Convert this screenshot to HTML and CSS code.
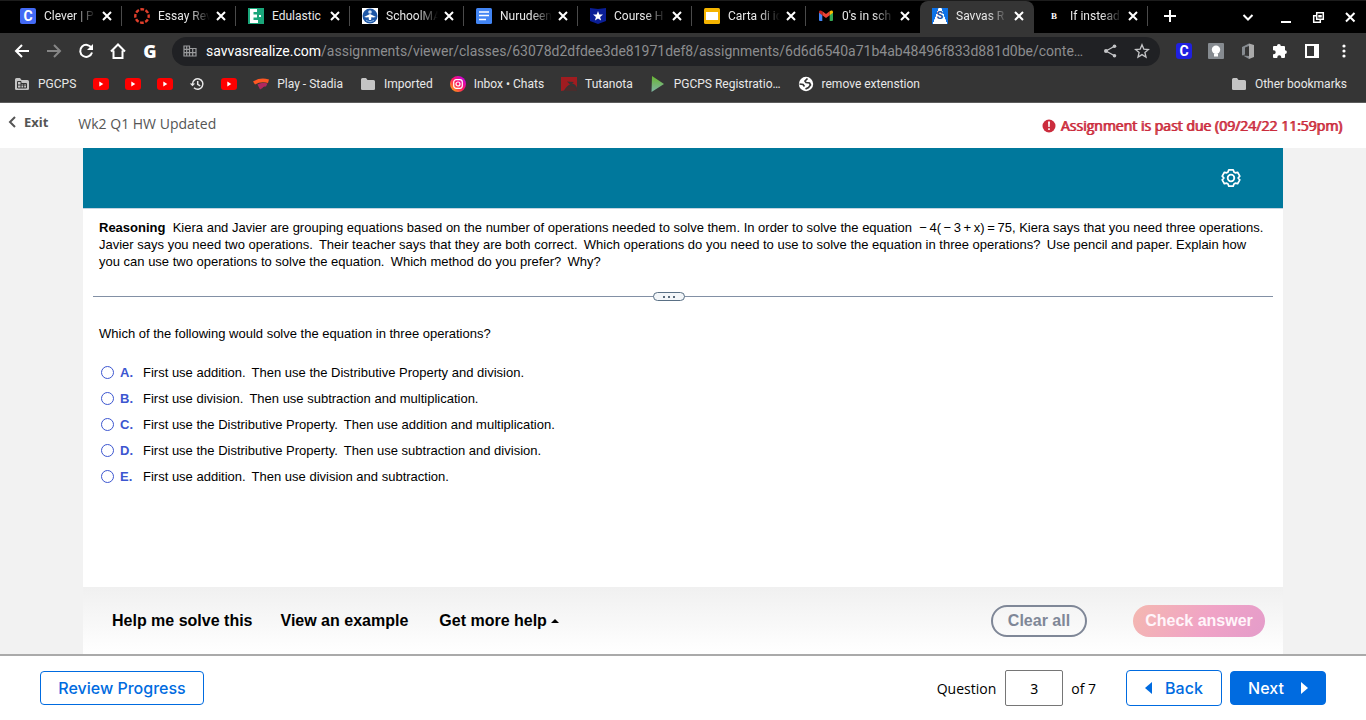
FILE: index.html
```html
<!DOCTYPE html>
<html lang="en">
<head>
    <meta charset="UTF-8">
    <meta name="viewport" content="width=device-width, initial-scale=1.0">
    <title>Savvas Realize</title>
    <link rel="stylesheet" href="styles.css">
</head>
<body>
    <div class="browser">
        <div class="tabs">
            <div class="tab">
                <span class="favicon clever">C</span>
                <a class="tab-title" href="#">Clever | P</a>
                <button class="close" aria-label="Close tab"><svg width="10" height="10" viewBox="0 0 10 10"><path d="M1 1l8 8M9 1L1 9"/></svg></button>
            </div>
            <div class="tab">
                <svg class="favicon" width="16" height="16" viewBox="0 0 16 16"><circle cx="8" cy="8" r="6.7" fill="none" stroke="#e13f2b" stroke-width="2.4" stroke-dasharray="3.7 1.56" stroke-dashoffset="1.8"/></svg>
                <a class="tab-title" href="#">Essay Rev</a>
                <button class="close" aria-label="Close tab"><svg width="10" height="10" viewBox="0 0 10 10"><path d="M1 1l8 8M9 1L1 9"/></svg></button>
            </div>
            <div class="tab">
                <svg class="favicon" width="16" height="16" viewBox="0 0 16 16"><path fill="#1aa67a" d="M0 0h16v16H0z"/><path fill="#fff" d="M2 1h7v3H5.500v2.500H9v3H5.500V12H10v3H2zM11 7h2v2h-2z"/></svg>
                <a class="tab-title fits" href="#">Edulastic</a>
                <button class="close" aria-label="Close tab"><svg width="10" height="10" viewBox="0 0 10 10"><path d="M1 1l8 8M9 1L1 9"/></svg></button>
            </div>
            <div class="tab">
                <svg class="favicon" width="16" height="16" viewBox="0 0 16 16"><path fill="#fff" d="M0 0h16v16H0z"/><circle cx="8" cy="8" r="7.500" fill="#1d56a5"/><circle cx="8" cy="4" r="1.800" fill="#cfe0f5"/><path d="M2 9l4-2 2-1 2 1 4 2-3 .5-1.500-.5L9 12H7L6.500 9 5 9.500z" fill="#fff"/><path d="M4 12.500q4 2.500 8 0" stroke="#8db8e8" fill="none"/></svg>
                <a class="tab-title" href="#">SchoolMA</a>
                <button class="close" aria-label="Close tab"><svg width="10" height="10" viewBox="0 0 10 10"><path d="M1 1l8 8M9 1L1 9"/></svg></button>
            </div>
            <div class="tab">
                <svg class="favicon" width="16" height="16" viewBox="0 0 16 16"><rect width="16" height="16" rx="1.500" fill="#4285f4"/><path d="M3 4h10M3 7.500h10M3 11.500h7" stroke="#fff" stroke-width="1.700"/></svg>
                <a class="tab-title" href="#">Nurudeen</a>
                <button class="close" aria-label="Close tab"><svg width="10" height="10" viewBox="0 0 10 10"><path d="M1 1l8 8M9 1L1 9"/></svg></button>
            </div>
            <div class="tab">
                <svg class="favicon" width="16" height="16" viewBox="0 0 16 16"><path fill="#0a1e96" d="M0 0l8 1 8-1v13l-8 3-8-3z"/><path fill="#fff" d="M8 3l1.300 3.400 3.700.2-2.900 2.300 1 3.600L8 10.500l-3.100 2 1-3.600L3 6.600l3.700-.2z"/></svg>
                <a class="tab-title" href="#">Course H</a>
                <button class="close" aria-label="Close tab"><svg width="10" height="10" viewBox="0 0 10 10"><path d="M1 1l8 8M9 1L1 9"/></svg></button>
            </div>
            <div class="tab">
                <svg class="favicon" width="16" height="16" viewBox="0 0 16 16"><rect width="16" height="16" rx="1.500" fill="#f5b400"/><path fill="#fff" d="M2 4h12v8H2z"/></svg>
                <a class="tab-title" href="#">Carta di id</a>
                <button class="close" aria-label="Close tab"><svg width="10" height="10" viewBox="0 0 10 10"><path d="M1 1l8 8M9 1L1 9"/></svg></button>
            </div>
            <div class="tab no-line">
                <svg class="favicon" width="16" height="16" viewBox="0 0 16 16"><path fill="#4285f4" d="M1 4l3.300 2.500V13H2a1 1 0 0 1-1-1z"/><path fill="#34a853" d="M15 4l-3.300 2.500V13H14a1 1 0 0 0 1-1z"/><path fill="#ea4335" d="M4.300 3.200L8 6l3.700-2.800v4L8 10 4.300 7.200z"/><path fill="#c5221f" d="M1 4c0-2 2-2 3.300-.8v4L1 4.700z"/><path fill="#fbbc04" d="M15 4c0-2-2-2-3.300-.8v4L15 4.700z"/></svg>
                <a class="tab-title" href="#">0's in sch</a>
                <button class="close" aria-label="Close tab"><svg width="10" height="10" viewBox="0 0 10 10"><path d="M1 1l8 8M9 1L1 9"/></svg></button>
            </div>
            <div class="tab active no-line">
                <span class="favicon savvas">S</span>
                <a class="tab-title" href="#">Savvas R</a>
                <button class="close" aria-label="Close tab"><svg width="10" height="10" viewBox="0 0 10 10"><path d="M1 1l8 8M9 1L1 9"/></svg></button>
            </div>
            <div class="tab">
                <span class="favicon brainly">B</span>
                <a class="tab-title" href="#">If instead</a>
                <button class="close" aria-label="Close tab"><svg width="10" height="10" viewBox="0 0 10 10"><path d="M1 1l8 8M9 1L1 9"/></svg></button>
            </div>
            <button class="new-tab" aria-label="New tab"><svg width="12" height="12" viewBox="0 0 12 12"><path d="M6 0v12M0 6h12"/></svg></button>
            <div class="window-buttons">
                <button aria-label="Search tabs"><svg width="16" height="16" viewBox="0 0 16 16"><path d="M3.500 6L8 10.500 12.500 6"/></svg></button>
                <button aria-label="Minimize"><svg width="16" height="16" viewBox="0 0 16 16"><path d="M3 13h10"/></svg></button>
                <button aria-label="Restore"><svg width="16" height="16" viewBox="0 0 16 16"><path class="thin" d="M6.700 3.700h6.600v6.600H6.700zM6 6.700H3.700v6.600h6.600V11M9 6.700h2v1H9z"/></svg></button>
                <button aria-label="Close"><svg width="16" height="16" viewBox="0 0 16 16"><path d="M4 4l8.500 8.500M12.500 4L4 12.500"/></svg></button>
            </div>
        </div>

        <div class="toolbar">
            <button aria-label="Back"><svg width="16" height="16" viewBox="0 0 16 16"><path d="M15 8H2M8 2L2 8l6 6"/></svg></button>
            <button class="dim" aria-label="Forward"><svg width="16" height="16" viewBox="0 0 16 16"><path d="M1 8h13M8 2l6 6-6 6"/></svg></button>
            <button aria-label="Reload"><svg width="16" height="16" viewBox="0 0 16 16"><path d="M13.500 5A6 6 0 1 0 14 9.500"/><path class="solid" d="M15 1v6H9z"/></svg></button>
            <button aria-label="Home"><svg width="16" height="16" viewBox="0 0 16 16"><path d="M1 8.500L8 1.500l7 7M3.500 7.500V15h9V7.500"/></svg></button>
            <button class="google" aria-label="Google">G</button>
            <div class="address">
                <svg width="14" height="14" viewBox="0 0 14 14"><path class="site" d="M1 2h5.500v10H1zM6.500 4.500H13V12H6.500M1 5.300h5.500M1 8.600h12M3.700 2v10M9.700 4.500V12"/></svg>
                <a class="url" href="#"><span class="host">savvasrealize.com</span>/assignments/viewer/classes/63078d2dfdee3de81971def8/assignments/6d6d6540a71b4ab48496f833d881d0be/conte…</a>
                <button aria-label="Share"><svg width="16" height="16" viewBox="0 0 16 16"><path class="line" d="M12.500 3.300L4 8l8.500 4.700"/><g class="solid silver"><circle cx="12.500" cy="3.300" r="1.800"/><circle cx="4" cy="8" r="2"/><circle cx="12.500" cy="12.700" r="1.800"/></g></svg></button>
                <button aria-label="Bookmark"><svg width="16" height="16" viewBox="0 0 16 16"><path class="line" d="M8 1.800l1.800 4.300 4.700.4-3.600 3 1.100 4.600L8 11.600l-4 2.500 1.100-4.600-3.600-3 4.700-.4z"/></svg></button>
            </div>
            <div class="extensions">
                <button class="favicon ext-clever" aria-label="Clever">C</button>
                <button aria-label="Lightbulb"><svg width="16" height="16" viewBox="0 0 16 16"><rect class="solid gray" width="16" height="16" rx="1"/><circle class="solid" cx="8" cy="6.800" r="4.200"/><path class="solid" d="M6 11h4v2.500H6z"/></svg></button>
                <button aria-label="Office"><svg width="16" height="16" viewBox="0 0 16 16"><path class="solid gray" d="M2 4l7-3.500V3L5 4.500v7l-3 1z"/><path class="solid light" d="M9 .5L14 2v12l-5 2z"/><path class="solid gray" d="M3 12.500l6 .5v3z"/></svg></button>
                <button aria-label="Extensions"><svg width="16" height="16" viewBox="0 0 16 16"><path class="solid" d="M5 3a1.900 1.900 0 0 1 3.800 0H12q1 0 1 1v3.200a1.900 1.900 0 0 1 0 3.800v3q0 1-1 1H9.300v-.7a2 2 0 0 0-4 0v.7H2q-1 0-1-1v-2.700h.7a2 2 0 0 0 0-4H1V4q0-1 1-1z"/></svg></button>
                <button aria-label="Side panel"><svg width="16" height="16" viewBox="0 0 16 16"><path class="solid" fill-rule="evenodd" d="M1 1h14v14H1zm2 2v10h7V3z"/></svg></button>
                <button aria-label="Menu"><svg width="16" height="16" viewBox="0 0 16 16"><g class="solid"><circle cx="8" cy="3" r="1.600"/><circle cx="8" cy="8" r="1.600"/><circle cx="8" cy="13" r="1.600"/></g></svg></button>
            </div>
        </div>

        <nav class="bookmarks">
            <a class="named" href="#"><svg width="16" height="14" viewBox="0 0 16 14"><path d="M1 2.500Q1 1 2.500 1H6l1.500 2h6Q15 3 15 4.500V12q0 1-1.500 1h-11Q1 13 1 12z" fill="#c4c4c4"/><path d="M3.500 4.500h3.500v6.500h-3.500zM7 6.500h5.500v4.500H7M3.500 8h9M9.700 6.500v4.500" fill="none" stroke="#353535"/></svg>PGCPS</a>
            <a href="#" aria-label="YouTube"><svg width="16" height="12" viewBox="0 0 16 12"><rect width="16" height="12" rx="3" fill="#f00"/><path d="M6.300 3.500v5l4-2.500z" fill="#fff"/></svg></a>
            <a href="#" aria-label="YouTube"><svg width="16" height="12" viewBox="0 0 16 12"><rect width="16" height="12" rx="3" fill="#f00"/><path d="M6.300 3.500v5l4-2.500z" fill="#fff"/></svg></a>
            <a href="#" aria-label="YouTube"><svg width="16" height="12" viewBox="0 0 16 12"><rect width="16" height="12" rx="3" fill="#f00"/><path d="M6.300 3.500v5l4-2.500z" fill="#fff"/></svg></a>
            <a href="#" aria-label="History"><svg width="16" height="14" viewBox="0 0 16 14"><path d="M3.500 7A5.200 5.200 0 1 1 5 10.700M8.700 4v3.300l2.500 1.500" fill="none" stroke="#e8e8e8" stroke-width="1.500"/><path d="M.8 6.500h5.400L3.500 9.300z" fill="#e8e8e8"/></svg></a>
            <a href="#" aria-label="YouTube"><svg width="16" height="12" viewBox="0 0 16 12"><rect width="16" height="12" rx="3" fill="#f00"/><path d="M6.300 3.500v5l4-2.500z" fill="#fff"/></svg></a>
            <a class="named" href="#"><svg width="16" height="12" viewBox="0 0 16 12"><path d="M0 3.500Q7-1 16 1.500L15 5Q8 3 2 6.500z" fill="#ff5722"/><path d="M4.500 6.500q5-3 10-1l-1.500 3q-3-.5-3.500 1.500L7 11.500z" fill="#b0285f"/></svg>Play - Stadia</a>
            <a class="named" href="#"><svg width="16" height="14" viewBox="0 0 16 14"><path d="M1 2.500Q1 1 2.500 1H6l1.500 2h6Q15 3 15 4.500V12q0 1-1.500 1h-11Q1 13 1 12z" fill="#c4c4c4"/></svg>Imported</a>
            <a class="named" href="#"><svg width="16" height="16" viewBox="0 0 16 16"><defs><linearGradient id="insta" x1="0" y1="1" x2="1" y2="0"><stop offset="0" stop-color="#ffc400"/><stop offset=".5" stop-color="#ff1464"/><stop offset="1" stop-color="#b400ff"/></linearGradient></defs><circle cx="8" cy="8" r="8" fill="url(#insta)"/><rect x="3.700" y="3.700" width="8.600" height="8.600" rx="2.500" fill="none" stroke="#fff" stroke-width="1.200"/><circle cx="8" cy="8" r="2" fill="none" stroke="#fff" stroke-width="1.200"/></svg>Inbox • Chats</a>
            <a class="named" href="#"><svg width="16" height="16" viewBox="0 0 16 16"><path d="M0 1h16v11q-1-4-5-4.500L13 6 6 5.500l3 3q-3 1-6 6L0 15z" fill="#a01c20"/><path d="M4 15q2-5 7-5 4 1 5 5z" fill="#4a2c2c"/></svg>Tutanota</a>
            <a class="named" href="#"><svg width="16" height="16" viewBox="0 0 16 16"><defs><linearGradient id="play" x1="0" y1="0" x2="0" y2="1"><stop offset="0" stop-color="#68b631"/><stop offset="1" stop-color="#7fb5a5"/></linearGradient></defs><path d="M2 0l12 8-12.500 8z" fill="url(#play)"/></svg>PGCPS Registratio…</a>
            <a class="named" href="#"><svg width="16" height="16" viewBox="0 0 16 16"><circle cx="8" cy="8" r="7.200" fill="#fff"/><path d="M9.500 2.500L7 5l1 1.500 3.500.5 1 2-2 2.500-3 1.500M1.500 8l3.500.5 1.500 2" fill="none" stroke="#353535" stroke-width="1.700"/></svg>remove extenstion</a>
            <a class="named other" href="#"><svg width="16" height="14" viewBox="0 0 16 14"><path d="M1 2.500Q1 1 2.500 1H6l1.500 2h6Q15 3 15 4.500V12q0 1-1.500 1h-11Q1 13 1 12z" fill="#c4c4c4"/></svg>Other bookmarks</a>
        </nav>
    </div>

    <header class="header">
        <a class="exit" href="#"><svg width="8" height="12" viewBox="0 0 8 12"><path d="M7 1L2 6l5 5" fill="none" stroke="#555" stroke-width="2"/></svg>Exit</a>
        <h1>Wk2 Q1 HW Updated</h1>
        <div class="past-due"><svg width="14" height="14" viewBox="0 0 14 14"><circle cx="7" cy="7" r="6.500" fill="#cb2c3d"/><path d="M6 2.500h2L7.700 8H6.300zM6.200 9.200h1.600v1.900H6.200z" fill="#fff"/></svg>Assignment is past due (09/24/22 11:59pm)</div>
    </header>

    <main class="viewer">
        <div class="player">
            <div class="banner">
                <button aria-label="Settings"><svg width="20" height="20" viewBox="0 0 20 20"><path d="M7.800 1.800h4.400l.8 2.300 1.200.7 2.400-.5 2.200 3.800-1.700 1.900 1.700 1.900-2.200 3.800-2.400-.5-1.200.7-.8 2.300H7.800L7 15.900l-1.200-.7-2.400.5-2.200-3.800L2.900 10 1.200 8.100l2.200-3.800 2.400.5L7 4.100z" fill="none" stroke="#fff" stroke-width="1.700" stroke-linejoin="round"/><circle cx="10" cy="10" r="3.300" fill="none" stroke="#fff" stroke-width="1.800"/></svg></button>
            </div>
            <div class="question">
                <p class="problem"><b>Reasoning</b>&nbsp; Kiera and Javier are grouping equations based on the number of operations needed to solve them. In order to solve the equation &nbsp;−&#8201;4(&#8201;−&#8201;3&#8201;+&#8201;x)&#8201;=&#8201;75, Kiera says that you need three operations. Javier says you need two operations.&#8201; Their teacher says that they are both correct.&#8201; Which operations do you need to use to solve the equation in three operations?&#8201; Use pencil and paper. Explain how you can use two operations to solve the equation.&#8201; Which method do you prefer?&#8201; Why?</p>
                <div class="divider">
                    <button aria-label="Resize"><svg width="14" height="4" viewBox="0 0 14 4"><path d="M1 1h2v2H1zM6 1h2v2H6zM11 1h2v2h-2z" fill="#5a6b7b"/></svg></button>
                </div>
                <fieldset class="choices">
                    <legend>Which of the following would solve the equation in three operations?</legend>
                    <label><input type="radio" name="answer"><b>A.</b>First use addition.&#8201; Then use the Distributive Property and division.</label>
                    <label><input type="radio" name="answer"><b>B.</b>First use division.&#8201; Then use subtraction and multiplication.</label>
                    <label><input type="radio" name="answer"><b>C.</b>First use the Distributive Property.&#8201; Then use addition and multiplication.</label>
                    <label><input type="radio" name="answer"><b>D.</b>First use the Distributive Property.&#8201; Then use subtraction and division.</label>
                    <label><input type="radio" name="answer"><b>E.</b>First use addition.&#8201; Then use division and subtraction.</label>
                </fieldset>
            </div>
            <div class="help">
                <button>Help me solve this</button>
                <button>View an example</button>
                <button class="more">Get more help <svg width="8" height="4" viewBox="0 0 8 4"><path d="M0 4l4-4 4 4z"/></svg></button>
                <button class="clear">Clear all</button>
                <button class="check">Check answer</button>
            </div>
        </div>
    </main>

    <footer class="footer">
        <button class="btn review">Review Progress</button>
        <label for="question">Question</label>
        <input id="question" type="text" value="3">
        <span>of 7</span>
        <button class="btn back"><svg width="8" height="12" viewBox="0 0 8 12"><path d="M7 0v12L0 6z"/></svg>Back</button>
        <button class="btn next">Next<svg width="8" height="12" viewBox="0 0 8 12"><path d="M1 0v12l7-6z"/></svg></button>
    </footer>
</body>
</html>
```
FILE: styles.css
```css
* {
    box-sizing: border-box;
}
body {
    margin: 0;
    height: 100vh;
    display: flex;
    flex-direction: column;
    font-family: "Open Sans", sans-serif;
    background: #fff;
    overflow: hidden;
}
button {
    font: inherit;
    color: inherit;
    background: none;
    border: none;
    padding: 0;
    cursor: pointer;
}
a {
    color: inherit;
    text-decoration: none;
}
svg {
    display: block;
    flex: none;
}

/* browser */
.browser {
    font-family: Roboto, sans-serif;
    font-size: 12px;
    color: #e8e8e8;
    background: #353535;
    border-bottom: 1px solid #5c5c5c;
}
.tabs {
    display: flex;
    height: 33px;
    padding-left: 8px;
    background: #000;
    border-top: 1px solid #1c1c1c;
}
.tab {
    display: flex;
    align-items: center;
    width: 114px;
    padding: 0 10px 2px 12px;
    background: linear-gradient(#4a4a4a, #4a4a4a) right 5px / 1px 20px no-repeat;
}
.tab.no-line {
    background: none;
}
.tab.active {
    background: #353535;
    border-radius: 8px 8px 0 0;
}
.tab-title {
    flex: 1;
    margin: 0 6px 0 8px;
    overflow: hidden;
    white-space: nowrap;
    -webkit-mask-image: linear-gradient(90deg, #000 60%, transparent);
    mask-image: linear-gradient(90deg, #000 60%, transparent);
}
.tab-title.fits {
    -webkit-mask-image: none;
    mask-image: none;
}
.close svg,
.new-tab svg,
.window-buttons svg,
.toolbar svg {
    fill: none;
    stroke: #fff;
    stroke-width: 2;
}
.window-buttons .thin {
    stroke-width: 1.5;
}
.favicon {
    flex: none;
    width: 16px;
    height: 16px;
    line-height: 16px;
    text-align: center;
    font-weight: bold;
}
.clever {
    background: #436af5;
    border-radius: 2px;
    font-size: 14px;
    color: #fff;
}
.savvas {
    background: linear-gradient(110deg, #0d72e8 30%, transparent 31%), linear-gradient(250deg, #0d72e8 30%, #fff 31%);
    font-size: 11px;
    color: #1c4fa0;
}
.brainly {
    font-family: "Liberation Serif", serif;
    font-size: 9px;
    color: #fff;
}
.new-tab {
    margin: 0 16px 2px;
}
.window-buttons {
    display: flex;
    gap: 16px;
    margin-left: auto;
    padding-right: 8px;
}
.window-buttons button:first-child {
    margin-right: 6px;
}
.toolbar {
    display: flex;
    align-items: center;
    gap: 16px;
    height: 36px;
    padding: 0 14px;
}
.toolbar .dim {
    opacity: 0.4;
}
.toolbar .solid {
    fill: #fff;
    stroke: none;
}
.toolbar .gray {
    fill: #868b90;
}
.toolbar .light {
    fill: #aaa;
}
.toolbar .silver {
    fill: #c4c5c7;
}
.toolbar .line {
    stroke: #c4c5c7;
    stroke-width: 1.3;
}
.toolbar .site {
    stroke: #9a9b9d;
    stroke-width: 1.2;
}
.toolbar .google {
    width: 16px;
    font-family: "Open Sans", sans-serif;
    font-size: 18px;
    font-weight: 800;
    line-height: 16px;
    color: #fff;
}
.address {
    flex: 1;
    min-width: 0;
    display: flex;
    align-items: center;
    gap: 16px;
    height: 29px;
    margin-left: -2px;
    padding: 0 10px 0 11px;
    border-radius: 15px;
    background: #202124;
}
.url {
    flex: 1;
    margin-left: -7px;
    overflow: hidden;
    white-space: nowrap;
    text-overflow: ellipsis;
    font-size: 14px;
    color: #8c8d8f;
}
.host {
    color: #fff;
}
.extensions {
    display: flex;
    gap: 16px;
}
.ext-clever {
    background: #2020e0;
    border-radius: 3px;
    font-size: 14px;
    color: #fff;
}
.bookmarks {
    display: flex;
    align-items: center;
    gap: 16px;
    height: 33px;
    padding: 0 18px 3px 14px;
}
.bookmarks a {
    display: flex;
    align-items: center;
    gap: 8px;
}
.bookmarks .named {
    padding-right: 1px;
}
.bookmarks .other {
    margin-left: auto;
}

/* assignment header */
.header {
    display: flex;
    align-items: center;
    height: 45px;
    padding: 0 24px 0 8px;
    color: #555;
}
.exit {
    display: flex;
    align-items: center;
    gap: 8px;
    padding-bottom: 8px;
    font-family: "Noto Sans", sans-serif;
    font-size: 13px;
    font-weight: bold;
}
.header h1 {
    margin: 0 0 4px 30px;
    font-size: 14px;
    font-weight: normal;
}
.past-due {
    display: flex;
    align-items: center;
    gap: 4px;
    margin-left: auto;
    font-size: 14px;
    color: #cb2c3d;
    text-shadow: 1px 0 0 #cb2c3d;
}

/* question */
.viewer {
    flex: 1;
    min-height: 0;
    background: #f2f2f2;
}
.player {
    display: flex;
    flex-direction: column;
    height: 100%;
    max-width: 1200px;
    margin: 0 auto;
    background: #fff;
    font-family: "Liberation Sans", sans-serif;
}
.banner {
    display: flex;
    align-items: center;
    justify-content: flex-end;
    height: 61px;
    padding-right: 42px;
    background: #00789c;
    border-bottom: 1px solid #c5d3e0;
}
.question {
    flex: 1;
    padding: 10px;
    font-size: 13px;
}
.problem {
    margin: 0 6px;
    line-height: 17px;
}
.divider {
    display: flex;
    align-items: center;
    justify-content: center;
    margin: 22px 0 24px;
    height: 9px;
    padding-right: 28px;
    background: linear-gradient(#8290a5, #8290a5) center / 100% 1px no-repeat;
}
.divider button {
    display: flex;
    align-items: center;
    justify-content: center;
    width: 32px;
    height: 9px;
    background: #f3f6f9;
    border: 1px solid #5a7085;
    border-radius: 5px;
}
.choices {
    border: none;
    margin: 0;
    padding: 0 6px;
}
.choices legend {
    padding: 0;
    margin-bottom: 17px;
    line-height: 17px;
}
.choices label {
    display: flex;
    align-items: center;
    height: 26px;
}
.choices input {
    appearance: none;
    width: 13px;
    height: 13px;
    margin: 0 6px 0 2px;
    border: 1px solid #3c56d0;
    border-radius: 50%;
}
.choices input:checked {
    background: #3c56d0;
}
.choices b {
    width: 23px;
    color: #3c56d0;
}
.help {
    display: flex;
    align-items: center;
    height: 67px;
    padding: 1px 18px 0 29px;
    background: linear-gradient(#f0f0f0, #fff);
    font-size: 16px;
    font-weight: bold;
}
.help button {
    margin-right: 28px;
}
.help .more {
    display: flex;
    align-items: center;
    gap: 4px;
    margin-left: 3px;
}
.help .clear {
    width: 96px;
    height: 32px;
    margin: 0 46px 0 auto;
    border: 2px solid #7f8797;
    border-radius: 16px;
    color: #7f8797;
}
.help .check {
    width: 132px;
    height: 32px;
    margin: 0;
    border-radius: 16px;
    background: linear-gradient(120deg, #f4b8b0, #f0a3c6 55%, #e49cca);
    color: #fff5fa;
}

/* footer */
.footer {
    display: flex;
    align-items: center;
    height: 66px;
    padding: 0 40px;
    border-top: 2px solid #aaa;
    font-size: 14px;
}
.footer input {
    width: 58px;
    height: 36px;
    margin: 0 8px 0 9px;
    border: 1px solid #767676;
    border-radius: 2px;
    text-align: center;
    font-family: "Noto Sans", sans-serif;
    font-size: 14px;
}
.btn {
    display: flex;
    align-items: center;
    justify-content: center;
    gap: 12px;
    width: 96px;
    height: 34px;
    border: 1px solid #006be0;
    border-radius: 4px;
    font-family: Inter, sans-serif;
    font-size: 16px;
    font-weight: 500;
    color: #006be0;
    fill: #006be0;
}
.review {
    width: 164px;
    margin-right: auto;
}
.back {
    height: 36px;
    margin: 0 8px 0 30px;
}
.next {
    gap: 16px;
    background: #006be0;
    color: #fff;
    fill: #fff;
}
```
